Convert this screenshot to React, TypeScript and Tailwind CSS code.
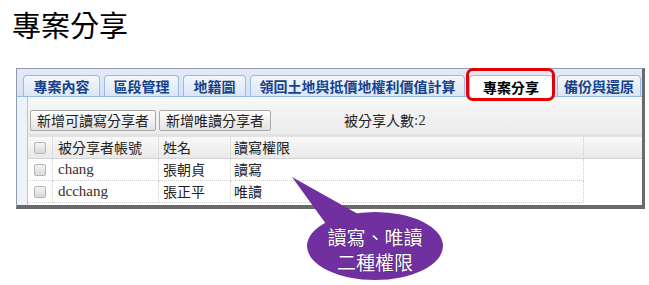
import React from "react";

const cjk = { fontFamily: '"Noto Sans CJK TC", "Noto Sans", sans-serif' };
const serif = { fontFamily: '"Liberation Serif", "Noto Sans CJK TC", serif' };

const tabs = [
  { label: "專案內容", w: "w-[77px]" },
  { label: "區段管理", w: "w-[75px]" },
  { label: "地籍圖", w: "w-[63px]" },
  { label: "領回土地與抵價地權利價值計算", w: "w-[215px]" },
  { label: "專案分享", w: "w-[84px]", active: true },
  { label: "備份與還原", w: "w-[84px]" },
];

const rows = [
  { account: "chang", name: "張朝貞", perm: "讀寫" },
  { account: "dcchang", name: "張正平", perm: "唯讀" },
];

function Check() {
  return <div className="w-[12px] h-[12px] rounded-[2px] border border-[#b5b5b5] bg-gradient-to-b from-[#f4f4f4] to-[#d8d8d8]" />;
}

export default function App() {
  return (
    <div className="relative w-[649px] h-[285px] bg-white overflow-hidden text-[#222]" style={cjk}>
      <div className="pl-[12px] pt-[7px] h-[68px] text-[29px] leading-[34px] text-black">專案分享</div>

      {/* screenshot frame */}
      <div className="ml-[16px] w-[629px] h-[141px] border-l border-t border-[#8e9bb0] border-r-[3px] border-b-[4px] border-r-[#6a6a6a] border-b-[#6a6a6a] bg-[#eef2f9] flex flex-col">
        <div className="h-[28px] flex items-end gap-[4px] pl-[6px] bg-gradient-to-b from-[#e4ebf6] to-[#d6e1f1] border-b border-[#99bbe8] text-[14px]">
          {tabs.map(t => (
            <div key={t.label}
              className={`${t.w} h-[21px] shrink-0 flex items-center justify-center rounded-t-[4px] border border-b-0 font-bold leading-none ${t.active ? "bg-white border-[#99bbe8] text-black h-[22px] -mb-px" : "bg-gradient-to-b from-[#f4f7fc] to-[#dbe6f4] border-[#99bbe8] text-[#15428b]"}`}>
              {t.label}
            </div>
          ))}
        </div>

        <div className="ml-[10px] flex-1 flex flex-col border-l border-[#c4c4c4] bg-white">
          <div className="h-[40px] flex items-start pt-[13px] pl-[2px] bg-gradient-to-b from-[#f7f7f7] to-[#ececec] border-b-[3px] border-[#e2e2e2] text-[14px]">
            <div className="h-[21px] px-[6px] flex items-center border border-[#a9a9a9] rounded-[2px] bg-gradient-to-b from-white to-[#e3e3e3]">新增可讀寫分享者</div>
            <div className="ml-[3px] h-[21px] px-[6px] flex items-center border border-[#a9a9a9] rounded-[2px] bg-gradient-to-b from-white to-[#e3e3e3]">新增唯讀分享者</div>
            <div className="ml-[73px] h-[21px] flex items-center">被分享人數<span style={serif} className="text-[15px] text-[#333]">:2</span></div>
          </div>

          <div className="h-[22px] flex text-[14px] bg-gradient-to-b from-[#f9f9f9] to-[#e9e9e9] border-b border-[#d4d4d4]">
            <div className="w-[25px] flex items-center justify-center border-r border-[#dedede]"><Check /></div>
            <div className="w-[106px] flex items-center pl-[5px] border-r border-[#dedede]">被分享者帳號</div>
            <div className="w-[72px] flex items-center pl-[4px] border-r border-[#dedede]">姓名</div>
            <div className="w-[353px] flex items-center pl-[3px] border-r border-[#dedede]">讀寫權限</div>
            <div className="flex-1" />
          </div>

          {rows.map(r => (
            <div key={r.account} className="h-[22px] flex text-[14px]">
              <div className="w-[25px] flex items-center justify-center border-r border-b border-dotted border-[#cfcfcf]"><Check /></div>
              <div className="w-[106px] flex items-center pl-[5px] border-r border-b border-dotted border-[#cfcfcf] text-[15px] text-[#3a2e1c]" style={serif}>{r.account}</div>
              <div className="w-[72px] flex items-center pl-[4px] border-r border-b border-dotted border-[#cfcfcf]">{r.name}</div>
              <div className="w-[353px] flex items-center pl-[3px] border-r border-b border-dotted border-[#cfcfcf]">{r.perm}</div>
              <div className="flex-1" />
            </div>
          ))}
        </div>
      </div>

      {/* annotation: red highlight around active tab */}
      <div className="absolute left-[466px] top-[68px] w-[89px] h-[33px] border-[3px] border-[#e30000] rounded-[7px]" />

      {/* annotation: purple callout */}
      <svg className="absolute left-0 top-0" width="649" height="285">
        <polygon points="292,177 326,224 358,214" fill="#7030a0" />
        <ellipse cx="375" cy="246" rx="68" ry="34" fill="#7030a0" />
      </svg>
      <div className="absolute left-[307px] top-[224px] w-[136px] flex flex-col items-center text-white text-[19px] leading-[25px]" style={{ ...cjk, textShadow: "0 0 1px #2a0a40" }}>
        <div>讀寫、唯讀</div>
        <div>二種權限</div>
      </div>
    </div>
  );
}
